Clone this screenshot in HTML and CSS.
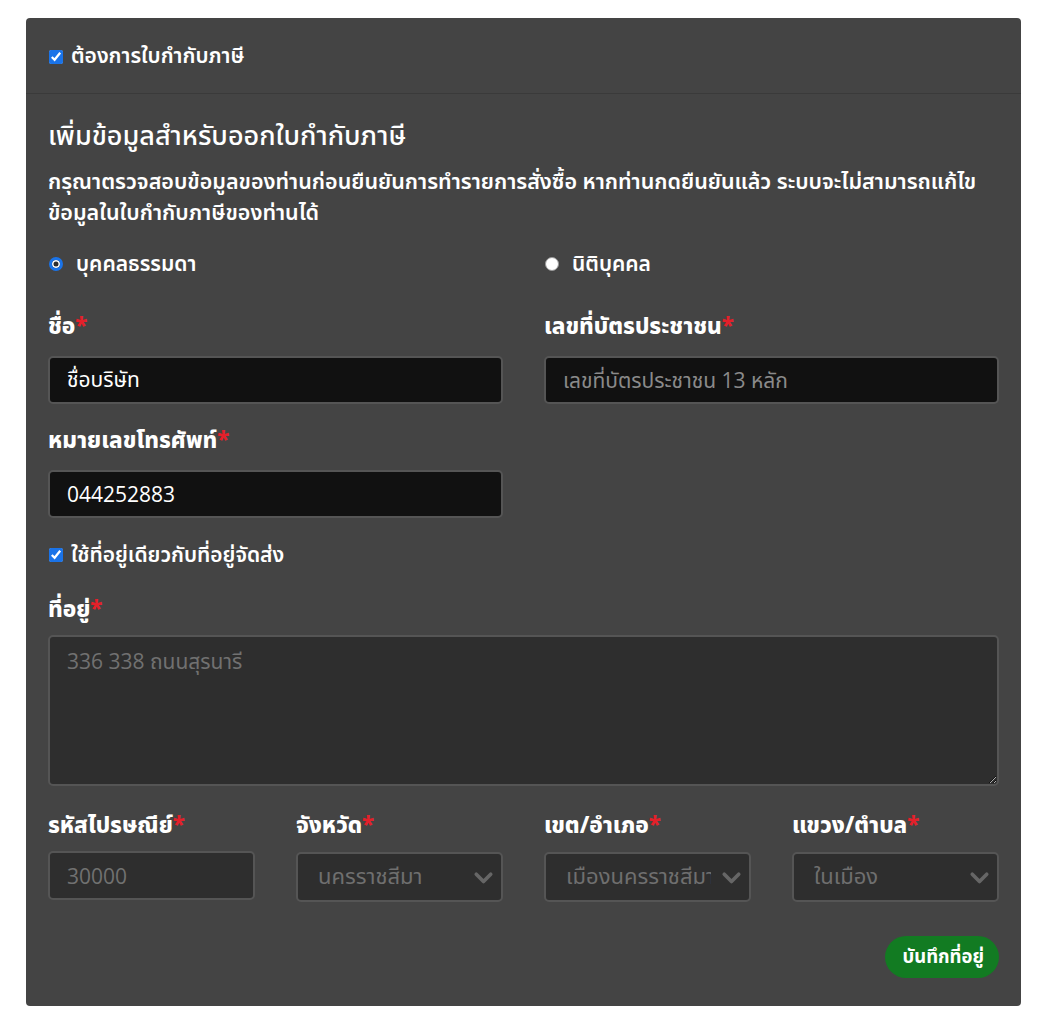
FILE: index.html
```html
<!DOCTYPE html>
<html lang="th">
<head>
<meta charset="utf-8">
<title>ใบกำกับภาษี</title>
<link rel="stylesheet" href="styles.css">
</head>
<body>
<div class="card">
  <div class="card-header">
    <label class="check"><input type="checkbox" checked><span>ต้องการใบกำกับภาษี</span></label>
  </div>
  <div class="card-body">
    <h2 class="title">เพิ่มข้อมูลสำหรับออกใบกำกับภาษี</h2>
    <p class="desc">กรุณาตรวจสอบข้อมูลของท่านก่อนยืนยันการทำรายการสั่งซื้อ หากท่านกดยืนยันแล้ว ระบบจะไม่สามารถแก้ไข ข้อมูลในใบกำกับภาษีของท่านได้</p>

    <div class="grid2 radios">
      <label class="radio"><input type="radio" name="type" checked><span>บุคคลธรรมดา</span></label>
      <label class="radio"><input type="radio" name="type"><span>นิติบุคคล</span></label>
    </div>

    <div class="grid2 row-name">
      <div class="field">
        <label class="lbl">ชื่อ<span class="req">*</span></label>
        <input class="input dark" type="text" value="ชื่อบริษัท">
      </div>
      <div class="field">
        <label class="lbl">เลขที่บัตรประชาชน<span class="req">*</span></label>
        <input class="input dark" type="text" placeholder="เลขที่บัตรประชาชน 13 หลัก">
      </div>
    </div>

    <div class="grid2 row-phone">
      <div class="field">
        <label class="lbl">หมายเลขโทรศัพท์<span class="req">*</span></label>
        <input class="input dark" type="text" value="044252883">
      </div>
    </div>

    <label class="check same"><input type="checkbox" checked><span>ใช้ที่อยู่เดียวกับที่อยู่จัดส่ง</span></label>

    <div class="field row-address">
      <label class="lbl">ที่อยู่<span class="req">*</span></label>
      <textarea class="input area" placeholder="336 338 ถนนสุรนารี" disabled></textarea>
    </div>

    <div class="grid4">
      <div class="field">
        <label class="lbl">รหัสไปรษณีย์<span class="req">*</span></label>
        <input class="input muted" type="text" placeholder="30000" disabled>
      </div>
      <div class="field">
        <label class="lbl">จังหวัด<span class="req">*</span></label>
        <div class="select"><span class="sel-text">นครราชสีมา</span><svg class="chev" viewBox="0 0 16 16"><path d="M2.5 5.5 L8 11 L13.5 5.5" fill="none" stroke="currentColor" stroke-width="2.8" stroke-linecap="round" stroke-linejoin="round"/></svg></div>
      </div>
      <div class="field">
        <label class="lbl">เขต/อำเภอ<span class="req">*</span></label>
        <div class="select"><span class="sel-text">เมืองนครราชสีมา</span><svg class="chev" viewBox="0 0 16 16"><path d="M2.5 5.5 L8 11 L13.5 5.5" fill="none" stroke="currentColor" stroke-width="2.8" stroke-linecap="round" stroke-linejoin="round"/></svg></div>
      </div>
      <div class="field">
        <label class="lbl">แขวง/ตำบล<span class="req">*</span></label>
        <div class="select"><span class="sel-text">ในเมือง</span><svg class="chev" viewBox="0 0 16 16"><path d="M2.5 5.5 L8 11 L13.5 5.5" fill="none" stroke="currentColor" stroke-width="2.8" stroke-linecap="round" stroke-linejoin="round"/></svg></div>
      </div>
    </div>

    <div class="actions">
      <button class="btn-save" type="button">บันทึกที่อยู่</button>
    </div>
  </div>
</div>
</body>
</html>
```
FILE: styles.css
```css
* { box-sizing: border-box; }
body {
  margin: 0;
  padding: 18px 21px 0 26px;
  background: #fff;
  font-family: "Noto Sans", "Noto Sans Thai", Tahoma, sans-serif;
  color: #fff;
}
.card {
  width: 995px;
  background: #444;
  border-radius: 4px;
}
.card-header {
  height: 76px;
  padding: 0 22px;
  display: flex;
  align-items: center;
  border-bottom: 1px solid #3a3a3a;
}
.check {
  display: flex;
  align-items: center;
  gap: 8px;
  font-size: 21px;
  font-weight: 600;
  height: 30px;
}
.card-header .check { margin-top: 2px; }
.check input {
  margin: 0 0 0 1px;
  width: 14px;
  height: 14px;
  accent-color: #1a73e8;
}
.card-body {
  padding: 20px 22px 28px;
}
.title {
  margin: 0;
  font-size: 27px;
  font-weight: 500;
  line-height: 42px;
}
.desc {
  margin: 9px 0 0;
  font-size: 21.5px;
  font-weight: 600;
  line-height: 31px;
}
.grid2 {
  display: grid;
  grid-template-columns: minmax(0, 1fr) minmax(0, 1fr);
  column-gap: 41px;
}
.grid4 {
  display: grid;
  grid-template-columns: repeat(4, minmax(0, 1fr));
  column-gap: 41px;
  margin-top: 25px;
}
.radios { margin-top: 22px; }
.radio {
  display: flex;
  align-items: center;
  gap: 13px;
  font-size: 21px;
  font-weight: 600;
  height: 30px;
}
.radio input {
  appearance: none;
  margin: 0 0 0 1px;
  width: 14px;
  height: 14px;
  border-radius: 50%;
  background: #fff;
  border: 1px solid #999;
}
.radio input:checked {
  background: #2d2d2d;
  border: 3px solid #1a73e8;
  box-shadow: inset 0 0 0 1.5px #fff;
}
.field {
  display: flex;
  flex-direction: column;
  min-width: 0;
}
.lbl {
  font-size: 22.5px;
  font-weight: 800;
  line-height: 28px;
  margin-bottom: 16px;
}
.req { color: #e4202a; }
.row-name { margin-top: 33px; }
.row-phone { margin-top: 22px; }
.row-address { margin-top: 25px; }
.row-address .lbl, .grid4 .lbl { margin-bottom: 12px; }
.input {
  width: 100%;
  font-family: "Open Sans", "Noto Sans", "Noto Sans Thai", sans-serif;
  font-size: 21px;
  height: 48px;
  padding: 0 17px;
  border: 2px solid #555;
  border-radius: 5px;
  color: #fff;
  outline: none;
}
.input.dark { background: #111; }
.input.dark::placeholder { color: #8a8a8a; }
.input.muted {
  background: #2e2e2e;
  height: 49px;
}
.input::placeholder { color: #717171; opacity: 1; }
.area {
  background: #2e2e2e;
  height: 151px;
  padding: 10px 17px;
  resize: vertical;
}
.same { margin-top: 22px; }
.select {
  height: 50px;
  margin-top: 1px;
  background: #2e2e2e;
  border: 2px solid #555;
  border-radius: 5px;
  display: flex;
  align-items: center;
  padding: 0 7px 0 20px;
  color: #6f6f6f;
  font-size: 22px;
  font-family: "Noto Sans", "Noto Sans Thai", sans-serif;
}
.sel-text {
  flex: 1;
  min-width: 0;
  overflow: hidden;
  white-space: nowrap;
  text-overflow: clip;
}
.chev {
  width: 21px;
  height: 21px;
  color: #666;
  flex: none;
  margin-left: 10px;
}
.actions {
  display: flex;
  justify-content: flex-end;
  margin-top: 34px;
}
.btn-save {
  background: #127b22;
  color: #fff;
  border: none;
  border-radius: 21px;
  height: 42px;
  padding: 0 15px 0 17px;
  font-family: "Noto Sans", "Noto Sans Thai", Tahoma, sans-serif;
  font-size: 18.5px;
  font-weight: 700;
}
```
